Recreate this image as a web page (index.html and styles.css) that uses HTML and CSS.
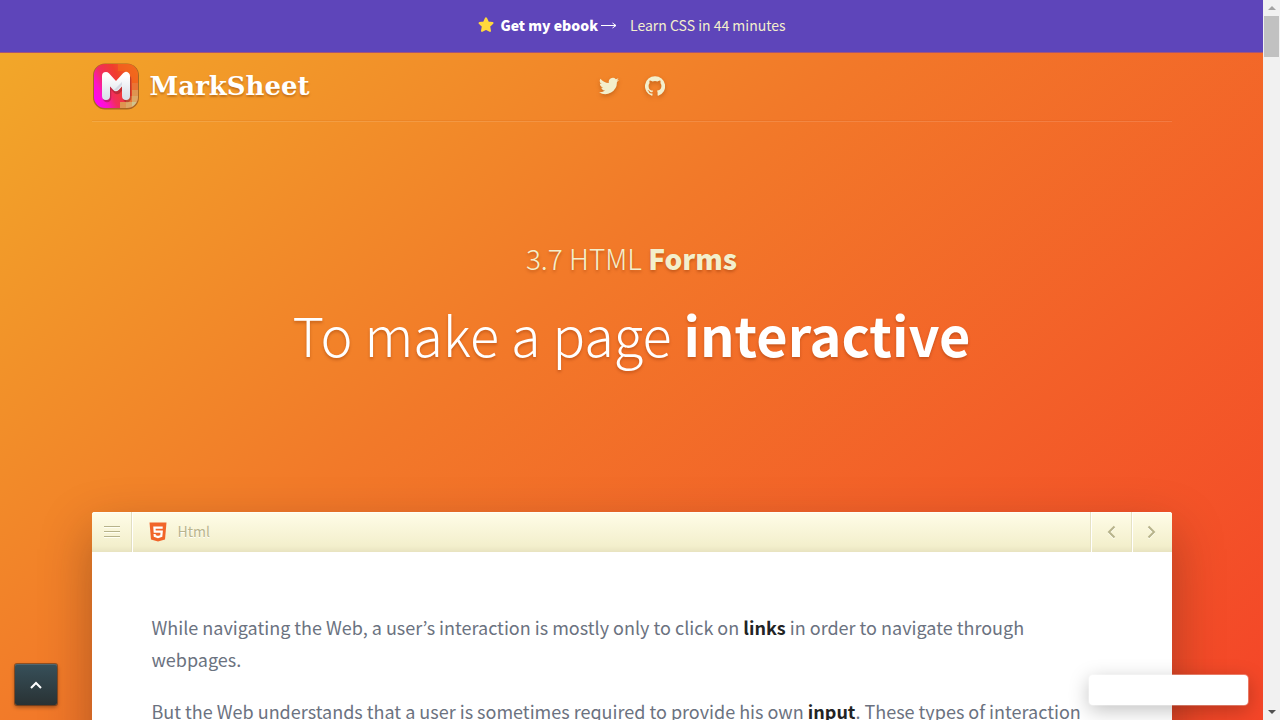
FILE: index.html
```html
<!DOCTYPE html>
<html lang="en">
<head>
<meta charset="utf-8">
<title>HTML Forms - MarkSheet</title>
<link rel="stylesheet" href="styles.css">
</head>
<body>
<div class="viewport">
  <a class="promo" href="#ebook">
    <svg class="star" viewBox="0 0 18 18" aria-hidden="true"><path d="M9 2.300l2 4.200 4.500.6-3.300 3.200.8 4.600L9 12.900l-4 2 .8-4.600-3.300-3.200 4.500-.6z"/></svg>
    <strong>Get my ebook</strong>
    <svg class="arrow" viewBox="0 0 16 10" aria-hidden="true"><path d="M0 5.500h15M11.500 3L15 5.500 11.500 8"/></svg>
    <span class="promo-text">Learn CSS in 44 minutes</span>
  </a>
  <div class="site">
    <header class="header container">
      <a class="brand" href="#home">
        <svg class="logo" viewBox="0 0 48 48" aria-hidden="true">
          <defs>
            <linearGradient id="tile" x1="0" y1=".75" x2="1" y2=".25"><stop offset="0" stop-color="#ff05f5"/><stop offset=".16" stop-color="#fc14c8"/><stop offset=".34" stop-color="#f22d5e"/><stop offset=".62" stop-color="#f03e2c"/><stop offset="1" stop-color="#f0701f"/></linearGradient>
            <linearGradient id="letter" x1="0" y1="0" x2="0" y2="1"><stop offset="0" stop-color="#fff"/><stop offset="1" stop-color="#dce3eb"/></linearGradient>
            <clipPath id="round"><rect x="2" y="2" width="44" height="44" rx="11"/></clipPath>
          </defs>
          <rect x="1" y="1.500" width="46" height="46" rx="12" fill="#8d5520" opacity=".75"/>
          <g clip-path="url(#round)">
            <path fill="url(#tile)" d="M2 2h44v44H2z"/>
            <path fill="#f2661b" d="M26 2h7v7h-7zM33 2h13v13H33zM40 15h6v6h-6z" opacity=".7"/>
            <path fill="#ea7434" d="M40 21h6v7h-6zM34 34h6v6h-6z"/>
            <path fill="#df9450" d="M40 28h6v6h-6zM28 40h6v6h-6z"/>
            <path fill="#dca765" d="M40 34h6v6h-6zM34 40h6v6h-6z"/>
            <path fill="#d0c48e" d="M40 40h6v6h-6z"/>
          </g>
          <path d="M14 34V15l10 11 10-11v19" transform="translate(1 2)" fill="none" stroke="#84202b" stroke-opacity=".45" stroke-width="8.500" stroke-linecap="round" stroke-linejoin="round"/>
          <path d="M14 34V14l10 11 10-11v20" fill="none" stroke="url(#letter)" stroke-width="8" stroke-linecap="round" stroke-linejoin="round"/>
          <path d="M22 28l8-8v3l-5 5z" fill="#c3ccd8" opacity=".6"/>
        </svg>
        <span class="wordmark">MarkSheet</span>
      </a>
      <nav class="social" aria-label="Social">
        <a href="#twitter" aria-label="Twitter"><svg viewBox="0 0 24 24"><path d="M24 4.600a10 10 0 0 1-2.800.8 5 5 0 0 0 2.100-2.700 10 10 0 0 1-3.100 1.200 4.900 4.900 0 0 0-8.400 4.500A14 14 0 0 1 1.700 3.200a4.900 4.900 0 0 0 1.500 6.500 5 5 0 0 1-2.200-.6c0 2.300 1.600 4.400 3.900 4.900a5 5 0 0 1-2.200.1 4.900 4.900 0 0 0 4.600 3.400A9.900 9.900 0 0 1 0 19.500 14 14 0 0 0 21.500 7.100 10 10 0 0 0 24 4.600z"/></svg></a>
        <a href="#github" aria-label="GitHub"><svg viewBox="0 0 24 24"><path d="M12 .3a12 12 0 0 0-3.800 23.400c.6.1.8-.3.8-.6v-2.200c-3.300.7-4-1.400-4-1.400-.6-1.400-1.400-1.800-1.400-1.800-1-.7.100-.7.100-.7 1.200 0 1.900 1.200 1.900 1.200 1 1.800 2.800 1.300 3.500 1 0-.8.400-1.300.7-1.600-2.700-.3-5.500-1.300-5.500-6 0-1.200.5-2.300 1.300-3.100-.2-.4-.6-1.600 0-3.200 0 0 1-.3 3.400 1.200a11.500 11.500 0 0 1 6 0c2.300-1.500 3.300-1.200 3.300-1.200.7 1.600.3 2.800.1 3.200.8.800 1.300 1.900 1.300 3.200 0 4.600-2.800 5.600-5.500 5.900.5.400.9 1 .9 2.200v3.300c0 .3.100.7.800.6A12 12 0 0 0 12 .3"/></svg></a>
      </nav>
    </header>
    <section class="hero container">
      <p class="chapter">3.7 HTML <strong>Forms</strong></p>
      <h1 class="title">To make a page <strong>interactive</strong></h1>
    </section>
    <main class="card container">
      <nav class="toolbar" aria-label="Lesson">
        <button class="tool menu" type="button" aria-label="Menu"><svg viewBox="0 0 16 14"><path d="M0 1.500h16M0 6.500h16M0 11.500h16"/></svg></button>
        <a class="section" href="#html">
          <svg class="html5" viewBox="0 0 18 20" aria-hidden="true"><path fill="#f1652a" d="M.5.500h17l-1.500 17L9 19.500l-7-2z"/><path fill="none" stroke="#fff" stroke-width="2.200" d="M13.700 5.600H5.400l.3 4.100h7l-.4 4.300L9 15l-3.200-1-.2-2"/></svg>
          <span>Html</span>
        </a>
        <a class="tool prev" href="#prev" aria-label="Previous"><svg viewBox="0 0 12 14"><path d="M8.500 1.500L3 7l5.500 5.500"/></svg></a>
        <a class="tool next" href="#next" aria-label="Next"><svg viewBox="0 0 12 14"><path d="M2.500 1.500L8 7l-5.500 5.500"/></svg></a>
      </nav>
      <article class="content">
        <p>While navigating the Web, a user’s interaction is mostly only to click on <strong>links</strong> in order to navigate through webpages.</p>
        <p>But the Web understands that a user is sometimes required to provide his own <strong>input</strong>. These types of interaction include:</p>
      </article>
    </main>
  </div>
  <a class="to-top" href="#top" aria-label="Back to top"><svg viewBox="0 0 14 10"><path d="M2 8l5-5 5 5"/></svg></a>
  <div class="toast"></div>
</div>
<div class="scrollbar" aria-hidden="true">
  <span class="up"></span>
  <span class="thumb"></span>
  <span class="down"></span>
</div>
</body>
</html>
```
FILE: styles.css
```css
* { box-sizing: border-box; }
body {
  margin: 0;
  height: 100vh;
  display: grid;
  grid-template-columns: minmax(0, 1fr) 17px;
  overflow: hidden;
  font-family: "Source Sans Pro", "Noto Sans CJK KR", "Noto Sans", sans-serif;
  color: #6b727f;
}
a { color: inherit; text-decoration: none; }
strong { font-weight: 700; }
p, h1 { margin: 0; }
svg { display: block; }

.viewport {
  position: relative;
  height: 100vh;
  display: flex;
  flex-direction: column;
  overflow: hidden;
}
.container { width: 100%; max-width: 1080px; margin: 0 auto; }

.promo {
  flex: none;
  height: 52px;
  padding-bottom: 2px;
  display: flex;
  align-items: center;
  justify-content: center;
  background: #5e45ba;
  color: #fff;
  font-size: 14px;
}
.promo strong { font-weight: 900; }
.star { width: 18px; height: 18px; margin-right: 5px; fill: #ffd83d; stroke: #ffd83d; stroke-width: 2; stroke-linejoin: round; }
.arrow { width: 16px; height: 10px; margin: 0 13px 0 3px; fill: none; stroke: #fff; }
.promo-text { color: #f3efcc; }

.site {
  flex: 1;
  min-height: 0;
  border-top: 1px solid #a55378;
  background: linear-gradient(141deg, #f2a729 0%, #f27929 41%, #f44528 100%);
}
.header {
  height: 69px;
  padding-bottom: 2px;
  display: grid;
  grid-template-columns: 1fr auto 1fr;
  align-items: center;
  border-bottom: 1px solid rgba(255, 255, 255, 0.12);
  box-shadow: inset 0 -1px rgba(190, 70, 10, 0.1);
}
.brand { display: flex; align-items: center; gap: 10px; }
.logo { width: 48px; height: 48px; }
.wordmark {
  font: 700 26px/36px "DejaVu Serif", serif;
  color: #fff;
  text-shadow: 0 2px 2px rgba(130, 60, 0, 0.4);
}
.social { display: flex; gap: 26px; }
.social svg { width: 20px; height: 20px; fill: #f3efcc; filter: drop-shadow(0 2px 2px rgba(120, 50, 0, 0.35)); }

.hero {
  height: 390px;
  padding-bottom: 26px;
  display: flex;
  flex-direction: column;
  align-items: center;
  justify-content: center;
  gap: 12px;
  text-align: center;
  color: #fff;
  text-shadow: 0 2px 3px rgba(120, 40, 0, 0.35);
}
.chapter { font-size: 28px; line-height: 48px; font-weight: 300; color: #f3efcc; }
.chapter strong { font-weight: 900; }
.title { font-size: 54px; line-height: 80px; font-weight: 300; }

.card {
  border-radius: 3px 3px 0 0;
  background: #fff;
  min-height: 300px;
  box-shadow: 0 20px 50px rgba(50, 30, 20, 0.35);
}
.toolbar {
  height: 40px;
  display: flex;
  border-radius: 3px 3px 0 0;
  background: linear-gradient(#fffde8, #f3efcc 85%, #e8e3c0);
  box-shadow: inset 0 1px #fffff6;
  color: #b9b58e;
}
.tool {
  width: 40px;
  padding: 0;
  border: 0;
  background: none;
  display: grid;
  place-items: center;
  color: inherit;
}
.tool svg { fill: none; stroke: #b7b38b; filter: drop-shadow(0 1px #fffff2); }
.menu { box-shadow: inset -1px 0 #e2dec0; }
.menu svg { width: 16px; height: 14px; }
.prev, .next { border-left: 1px solid #fff; box-shadow: -1px 0 #e6e2c2; }
.prev { width: 41px; }
.prev svg, .next svg { width: 12px; height: 14px; stroke-width: 2; }
.section {
  flex: 1;
  display: flex;
  align-items: center;
  gap: 11px;
  padding-left: 16px;
  border-left: 1px solid #fff;
  font-size: 14px;
  text-shadow: 0 1px #fff;
}
.section span { padding-bottom: 2px; }
.html5 { width: 18px; height: 20px; }
.content { padding: 59px 60px; font-size: 18px; line-height: 32px; }
.content p + p { margin-top: 20px; }
.content strong { color: #222324; }

.to-top {
  position: absolute;
  left: 15px;
  bottom: 15px;
  width: 42px;
  height: 41px;
  display: grid;
  place-items: center;
  border-radius: 2px;
  background: linear-gradient(#37505a, #293234);
  box-shadow: inset 0 1px #52666d, 0 0 0 1px rgba(60, 40, 25, 0.5), 0 2px 4px rgba(0, 0, 0, 0.4);
}
.to-top svg { width: 14px; height: 10px; fill: none; stroke: #fff; stroke-width: 2; }
.toast {
  position: absolute;
  right: 15px;
  bottom: 15px;
  width: 159px;
  height: 30px;
  border-radius: 4px;
  background: #fff;
  box-shadow: 0 0 0 1px rgba(255, 255, 255, 0.3), 0 5px 20px rgba(0, 0, 0, 0.25);
}

.scrollbar {
  background: #f1f1f1;
  display: flex;
  flex-direction: column;
  align-items: center;
  padding: 6px 0;
}
.up, .down { border: 4px solid transparent; }
.up { border-top: 0; border-bottom-color: #a3a3a3; }
.down { margin-top: auto; border-bottom: 0; border-top-color: #505050; }
.thumb { width: 15px; height: 41px; margin-top: 6px; background: #c1c1c1; }
```
